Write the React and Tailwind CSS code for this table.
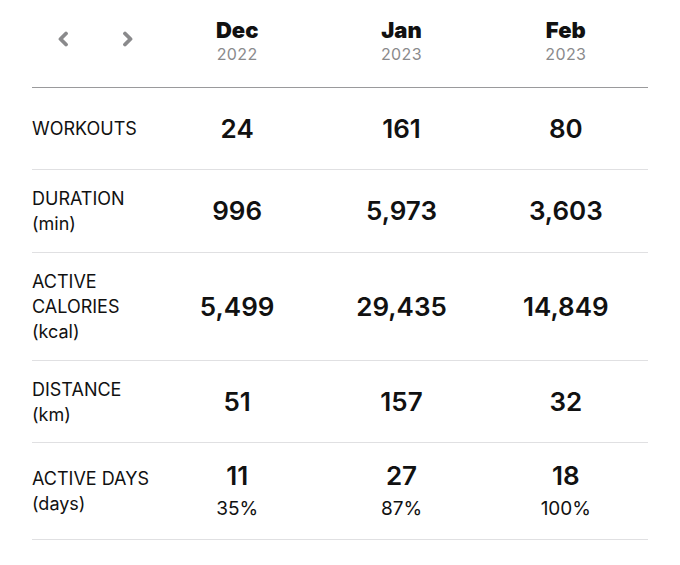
import React from 'react';

const months = [
  { name: 'Dec', year: '2022' },
  { name: 'Jan', year: '2023' },
  { name: 'Feb', year: '2023' },
];

const rows = [
  { label: ['WORKOUTS'], values: ['24', '161', '80'], h: 'h-[82px]' },
  { label: ['DURATION', '(min)'], values: ['996', '5,973', '3,603'], h: 'h-[83px]' },
  { label: ['ACTIVE', 'CALORIES', '(kcal)'], values: ['5,499', '29,435', '14,849'], h: 'h-[108px]' },
  { label: ['DISTANCE', '(km)'], values: ['51', '157', '32'], h: 'h-[82px]' },
  { label: ['ACTIVE DAYS', '(days)'], values: ['11', '27', '18'], sub: ['35%', '87%', '100%'], h: 'h-[97px]' },
];

function Chevron({ dir }) {
  const d = dir === 'left' ? 'M9 2.5 L3.5 8 L9 13.5' : 'M3 2.5 L8.5 8 L3 13.5';
  return (
    <svg width="12" height="16" viewBox="0 0 12 16" fill="none">
      <path d={d} stroke="#8a8a8c" strokeWidth="3.8" strokeLinecap="round" strokeLinejoin="round" />
    </svg>
  );
}

export default function App() {
  return (
    <div className="w-[680px] h-[565px] bg-white text-[#111] font-['Inter','Liberation_Sans',sans-serif]">
      <div className="mx-[32px] w-[616px]">
        {/* header with month columns */}
        <div className="grid grid-cols-[123px_1fr_1fr_1fr] h-[88px] border-b border-[#9a9a9c]">
          <div className="flex items-center pl-[25px] gap-[53px] pb-[10px]">
            <Chevron dir="left" />
            <Chevron dir="right" />
          </div>
          {months.map((m) => (
            <div key={m.name} className="flex flex-col items-center pt-[17px]">
              <div className="text-[22px] leading-[26px] font-black">{m.name}</div>
              <div className="text-[16px] leading-[22px] tracking-wide text-[#8a8a8c]">{m.year}</div>
            </div>
          ))}
        </div>

        {rows.map((r) => (
          <div key={r.label[0]} className={`grid grid-cols-[123px_1fr_1fr_1fr] items-center border-b border-[#e0e0e2] ${r.h}`}>
            <div className="text-[18px] leading-[25px]">
              {r.label.map((l) => (
                <div key={l}>{l}</div>
              ))}
            </div>
            {r.values.map((v, i) => (
              <div key={i} className="flex flex-col items-center">
                <div className="text-[26px] leading-[30px] font-semibold">{v}</div>
                {r.sub && <div className="text-[19px] leading-[24px] mt-[6px]">{r.sub[i]}</div>}
              </div>
            ))}
          </div>
        ))}
      </div>
    </div>
  );
}
